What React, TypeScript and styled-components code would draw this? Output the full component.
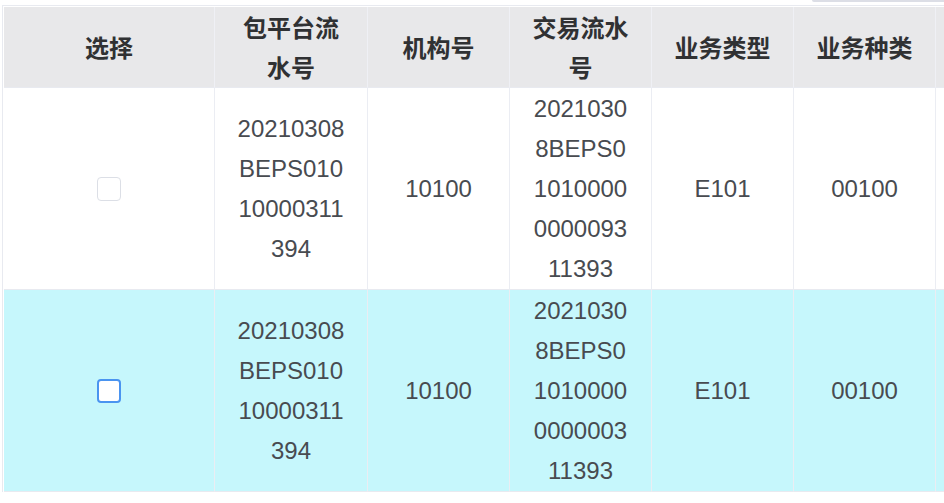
import React from "react";
import styled, { createGlobalStyle } from "styled-components";

const Global = createGlobalStyle`
  html, body { margin: 0; padding: 0; background: #ffffff; }
  body {
    font-family: "Liberation Sans", "Noto Sans CJK SC", Arial, sans-serif;
    overflow: hidden;
  }
`;

const Page = styled.div`
  width: 944px;
  height: 503px;
  overflow: hidden;
  background: #ffffff;
`;

const TopStrip = styled.div`
  height: 5px;
  display: flex;
  justify-content: flex-end;
  align-items: flex-start;
`;

const TopBar = styled.div`
  width: 132px;
  height: 2px;
  background: #dcdee6;
  border-bottom-left-radius: 4px;
`;

const TableWrap = styled.div`
  margin-left: 2px;
  border-top: 1px solid #e8eaf0;
  border-left: 1px solid #e8eaf0;
  padding: 1px 0 0 1px;
  overflow: hidden;
`;

const COLS = "211px 153px 142px 142px 142px 142px 142px";

const Row = styled.div<{ $active?: boolean }>`
  display: grid;
  grid-template-columns: ${COLS};
  width: max-content;
  background: ${(p) => (p.$active ? "#c6f7fc" : "#ffffff")};
`;

const HeadRow = styled(Row)`
  background: #e8e8ea;
`;

const HeadCell = styled.div`
  box-sizing: border-box;
  display: flex;
  align-items: center;
  justify-content: center;
  text-align: center;
  padding: 0 20px;
  height: 81px;
  line-height: 40px;
  font-size: 24px;
  font-weight: 700;
  color: #303133;
  border-right: 1px solid #eff0f5;
  border-bottom: 1px solid #e8eaf0;
  font-family: "Noto Sans CJK SC", "Liberation Sans", sans-serif;
`;

const Cell = styled.div`
  box-sizing: border-box;
  display: flex;
  align-items: center;
  justify-content: center;
  text-align: center;
  padding: 1px 20px 0;
  height: 202px;
  line-height: 40px;
  font-size: 24px;
  color: #484b50;
  word-break: break-all;
  border-right: 1px solid #ebedf3;
  border-bottom: 1px solid #e8eaf0;
`;

const CellText = styled.span`
  display: block;
  width: 100%;
`;

const Check = styled.span<{ $hover?: boolean }>`
  display: inline-block;
  box-sizing: border-box;
  width: 24px;
  height: 24px;
  border-radius: 4px;
  background: #ffffff;
  border: ${(p) => (p.$hover ? "2px solid #4a94f0" : "1px solid #dcdfe6")};
`;

const headers = ["选择", "包平台流水号", "机构号", "交易流水号", "业务类型", "业务种类", ""];

const rows = [
  {
    pkg: "20210308BEPS01010000311394",
    org: "10100",
    trx: "20210308BEPS01010000000009311393",
    type: "E101",
    kind: "00100",
  },
  {
    pkg: "20210308BEPS01010000311394",
    org: "10100",
    trx: "20210308BEPS01010000000000311393",
    type: "E101",
    kind: "00100",
  },
];

export default function App() {
  return (
    <Page>
      <Global />
      <TopStrip>
        <TopBar />
      </TopStrip>
      <TableWrap>
        <HeadRow>
          {headers.map((h, i) => (
            <HeadCell key={i}>
              <CellText>{h}</CellText>
            </HeadCell>
          ))}
        </HeadRow>
        {rows.map((r, i) => (
          <Row key={i} $active={i === 1}>
            <Cell>
              <Check $hover={i === 1} />
            </Cell>
            <Cell>
              <CellText>{r.pkg}</CellText>
            </Cell>
            <Cell>
              <CellText>{r.org}</CellText>
            </Cell>
            <Cell>
              <CellText>{r.trx}</CellText>
            </Cell>
            <Cell>
              <CellText>{r.type}</CellText>
            </Cell>
            <Cell>
              <CellText>{r.kind}</CellText>
            </Cell>
            <Cell />
          </Row>
        ))}
      </TableWrap>
    </Page>
  );
}
